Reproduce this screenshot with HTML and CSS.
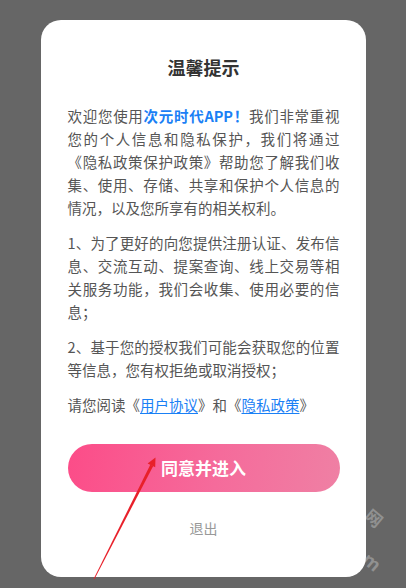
FILE: index.html
```html
<!DOCTYPE html>
<html lang="zh-CN">
<head>
<meta charset="utf-8">
<title>温馨提示</title>
<link rel="stylesheet" href="styles.css">
</head>
<body>
<div class="dialog">
  <h1 class="title">温馨提示</h1>
  <div class="content">
    <p class="para">欢迎您使用<strong class="app">次元时代APP！</strong>我们非常重视您的个人信息和隐私保护，我们将通过《隐私政策保护政策》帮助您了解我们收集、使用、存储、共享和保护个人信息的情况，以及您所享有的相关权利。</p>
    <p class="para">1、为了更好的向您提供注册认证、发布信息、交流互动、提案查询、线上交易等相关服务功能，我们会收集、使用必要的信息；</p>
    <p class="para">2、基于您的授权我们可能会获取您的位置等信息，您有权拒绝或取消授权；</p>
    <p class="para">请您阅读《<a class="link" href="#">用户协议</a>》和《<a class="link" href="#">隐私政策</a>》</p>
  </div>
  <button class="agree">同意并进入</button>
  <div class="exit">退出</div>
</div>
<span class="wm wm-1">网</span>
<span class="wm wm-2">m</span>
<svg class="arrow" width="406" height="588" viewBox="0 0 406 588">
  <polygon points="93.6,579 94.4,579.3 153.2,466 150.4,464.6" fill="#e8202a"/>
  <polygon points="155.5,457.5 147.6,463.5 155.2,467.2" fill="#e8202a"/>
</svg>
</body>
</html>
```
FILE: styles.css
```css
html, body {
  margin: 0;
  padding: 0;
}
body {
  background: #666666;
  width: 406px;
  height: 588px;
  overflow: hidden;
  position: relative;
  font-family: "Noto Sans CJK SC", "Noto Sans", sans-serif;
}
.dialog {
  margin: 20px 0 0 41px;
  width: 325px;
  box-sizing: border-box;
  background: #fff;
  border-radius: 20px;
  padding: 35px 26.5px 39px;
  display: flex;
  flex-direction: column;
}
.title {
  margin: 0;
  font-size: 18px;
  line-height: 25px;
  font-weight: 700;
  color: #333;
  text-align: center;
}
.content {
  margin-top: 23.5px;
  display: flex;
  flex-direction: column;
  gap: 12.3px;
}
.para {
  margin: 0;
  font-size: 14.5px;
  line-height: 23px;
  color: #555;
  text-align: justify;
}
.app {
  color: #1a80f5;
  font-weight: 700;
}
.link {
  color: #1a80f5;
  text-decoration: underline;
  text-underline-offset: 2px;
}
.agree {
  margin-top: 27.5px;
  height: 48px;
  border: none;
  border-radius: 24px;
  background: linear-gradient(100deg, #fc4c88 0%, #f56b9b 55%, #ef80a4 100%);
  color: #fff;
  font-family: inherit;
  font-size: 17px;
  font-weight: 700;
  padding: 0;
}
.exit {
  margin-top: 26px;
  font-size: 14px;
  line-height: 20px;
  color: #999;
  text-align: center;
}
.wm {
  position: absolute;
  color: rgba(255, 255, 255, 0.28);
  font-size: 17px;
  font-weight: 700;
  transform: rotate(40deg);
}
.wm-1 {
  left: 366px;
  top: 505px;
}
.wm-2 {
  left: 364px;
  top: 548px;
  font-size: 18px;
}
.arrow {
  position: absolute;
  left: 0;
  top: 0;
  pointer-events: none;
}
```
